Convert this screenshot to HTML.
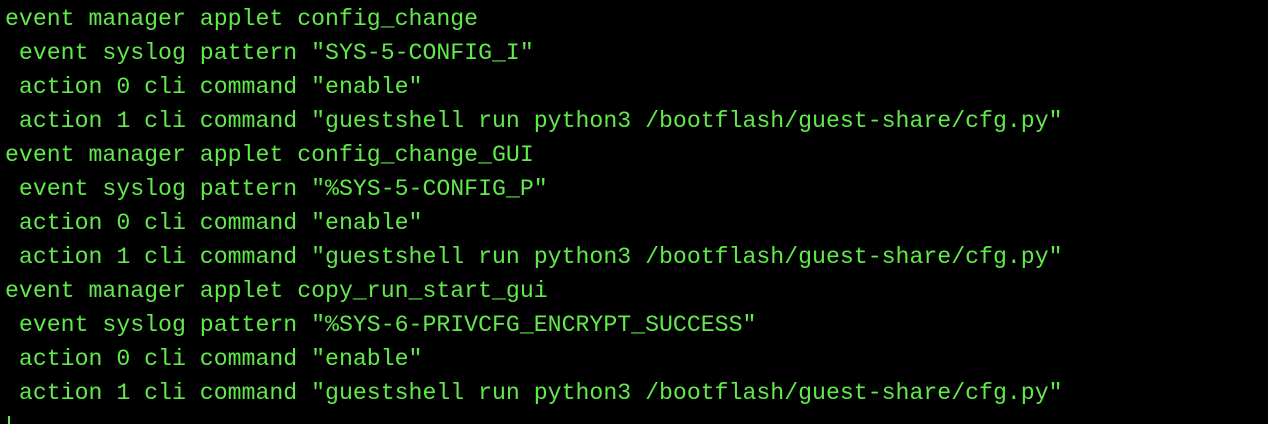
<!DOCTYPE html>
<html><head><style>
html,body{margin:0;padding:0;background:#000;width:1268px;height:424px;overflow:hidden}
pre{margin:0;padding:2px 0 0 5px;font-family:"Liberation Mono",monospace;font-size:23.2px;line-height:34px;color:#62ea4c;white-space:pre}
.cur{position:absolute;left:8px;top:416px;width:2px;height:8px;background:#62ea4c}
</style></head><body>
<pre>event manager applet config_change
 event syslog pattern "SYS-5-CONFIG_I"
 action 0 cli command "enable"
 action 1 cli command "guestshell run python3 /bootflash/guest-share/cfg.py"
event manager applet config_change_GUI
 event syslog pattern "%SYS-5-CONFIG_P"
 action 0 cli command "enable"
 action 1 cli command "guestshell run python3 /bootflash/guest-share/cfg.py"
event manager applet copy_run_start_gui
 event syslog pattern "%SYS-6-PRIVCFG_ENCRYPT_SUCCESS"
 action 0 cli command "enable"
 action 1 cli command "guestshell run python3 /bootflash/guest-share/cfg.py"</pre>
<div class="cur"></div>
</body></html>
